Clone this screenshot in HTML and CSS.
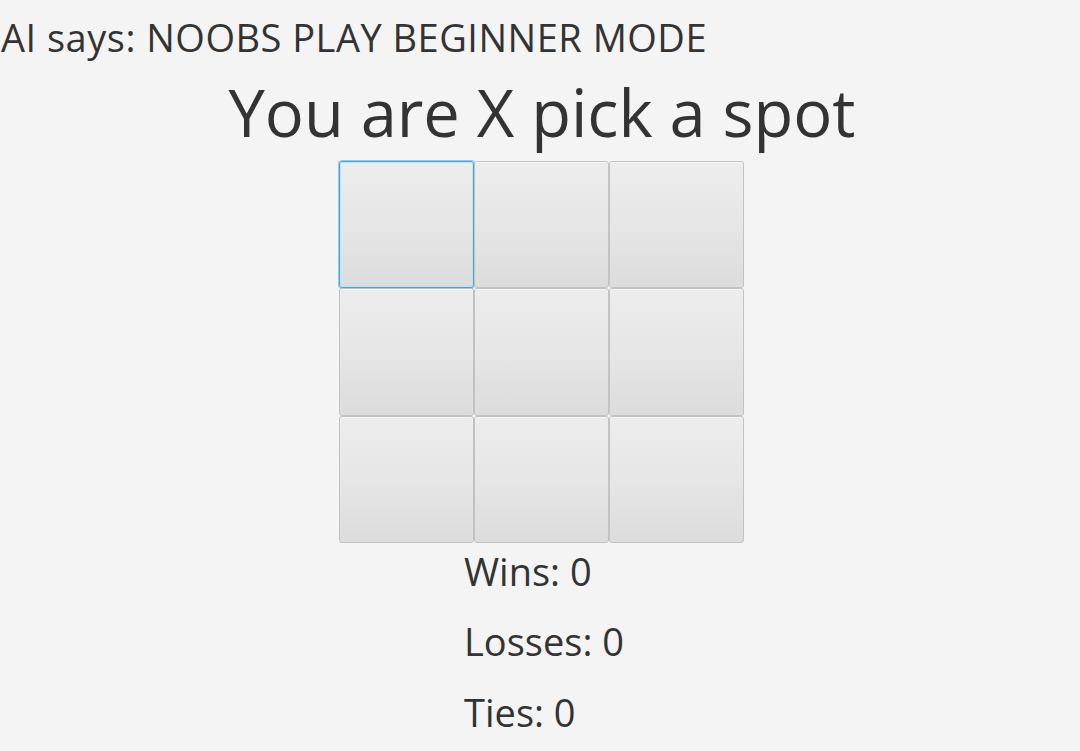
FILE: index.html
```html
<!DOCTYPE html>
<html>
<head>
<meta charset="utf-8">
<link rel="stylesheet" href="styles.css">
</head>
<body>
<div class="app">
  <div class="ai">AI says: NOOBS PLAY BEGINNER MODE</div>
  <div class="title">You are X pick a spot</div>
  <div class="board">
    <button class="cell focused"></button>
    <button class="cell"></button>
    <button class="cell"></button>
    <button class="cell"></button>
    <button class="cell"></button>
    <button class="cell"></button>
    <button class="cell"></button>
    <button class="cell"></button>
    <button class="cell"></button>
  </div>
  <div class="stats">
    <div class="stat">Wins: 0</div>
    <div class="stat">Losses: 0</div>
    <div class="stat">Ties: 0</div>
  </div>
</div>
</body>
</html>
```
FILE: styles.css
```css
html, body {
  margin: 0;
  padding: 0;
  background: #f4f4f4;
  height: 100%;
}
.app {
  font-family: "Open Sans", "Noto Sans", sans-serif;
  color: #333333;
  display: flex;
  flex-direction: column;
  width: 1080px;
  height: 751px;
  overflow: hidden;
}
.ai {
  font-size: 38px;
  line-height: 52px;
  height: 52px;
  margin-top: 11px;
  padding-left: 1px;
  letter-spacing: 0.5px;
  white-space: nowrap;
}
.title {
  font-size: 65px;
  line-height: 88px;
  height: 88px;
  text-align: center;
  margin-top: 5px;
  padding-left: 4px;
  white-space: nowrap;
}
.board {
  align-self: center;
  margin-left: 3px;
  display: grid;
  grid-template-columns: repeat(3, 135px);
  grid-template-rows: repeat(3, 127.3px);
  margin-top: 5px;
}
.cell {
  margin: 0;
  padding: 0;
  border: 1px solid #c2c2c2;
  border-radius: 3px;
  background: linear-gradient(to bottom, #ededed 0%, #e6e6e6 50%, #dcdcdc 100%);
  box-shadow: inset 0 1px 0 #f7f7f7;
}
.cell.focused {
  border: 1px solid #43a9dc;
  box-shadow: 0 0 0 1px #8fcbea, inset 0 0 0 1px #bfe1f2;
}
.stats {
  align-self: center;
  margin-left: 8px;
  display: flex;
  flex-direction: column;
  gap: 18.5px;
  margin-top: 2px;
}
.stat {
  font-size: 38px;
  line-height: 52px;
  height: 52px;
  white-space: nowrap;
}
```
